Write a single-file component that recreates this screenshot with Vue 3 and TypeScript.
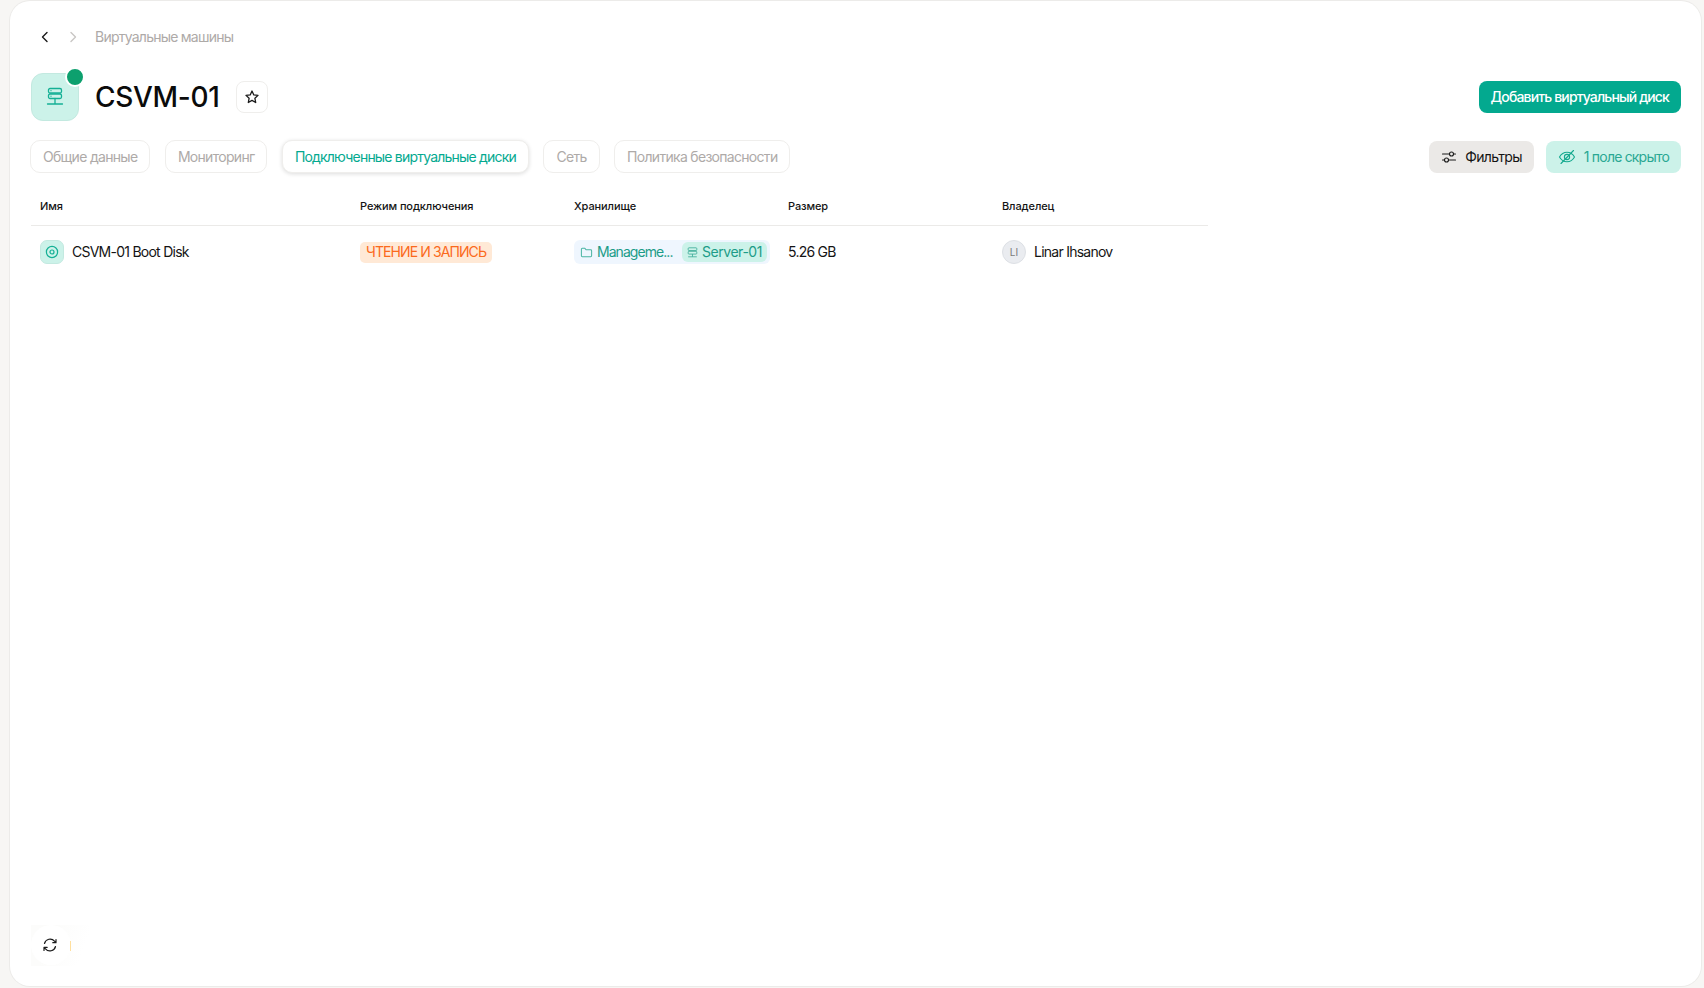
<script setup lang="ts">
const tabs = [
  { label: 'Общие данные', active: false },
  { label: 'Мониторинг', active: false },
  { label: 'Подключенные виртуальные диски', active: true },
  { label: 'Сеть', active: false },
  { label: 'Политика безопасности', active: false },
]
const columns = ['Имя', 'Режим подключения', 'Хранилище', 'Размер', 'Владелец']
</script>

<template>
  <div class="page">
    <main class="card">
      <nav class="crumbs">
        <svg class="nav-icon" viewBox="0 0 16 16"><path d="M10 3.500 5.500 8l4.500 4.500" fill="none" stroke="#1a1a1a" stroke-width="1.400" stroke-linecap="round" stroke-linejoin="round" /></svg>
        <svg class="nav-icon" viewBox="0 0 16 16"><path d="M6 3.500 10.500 8 6 12.500" fill="none" stroke="#c9c6c4" stroke-width="1.400" stroke-linecap="round" stroke-linejoin="round" /></svg>
        <span class="crumb-text">Виртуальные машины</span>
      </nav>

      <header class="head">
        <div class="vm-tile">
          <svg width="20" height="20" viewBox="0 0 20 20" fill="none" stroke="#14b095" stroke-width="1.300" stroke-linecap="round">
            <rect x="3.500" y="1.500" width="13" height="4.500" rx="1.500" />
            <rect x="3.500" y="7" width="13" height="4.500" rx="1.500" />
            <path d="M10 11.500V17M2.500 17h15M6 3.700h.01M6 9.200h.01" />
          </svg>
          <span class="status-dot"></span>
        </div>
        <h1 class="title">CSVM-01</h1>
        <button class="star">
          <svg width="16" height="16" viewBox="0 0 16 16"><path d="M8 2l1.800 3.900 4.200.5-3.100 2.900.8 4.200L8 11.400l-3.700 2.100.8-4.200L2 6.400l4.200-.5z" fill="none" stroke="#1a1a1a" stroke-width="1.300" stroke-linejoin="round" /></svg>
        </button>
        <button class="add">Добавить виртуальный диск</button>
      </header>

      <div class="toolbar">
        <div class="tabs">
          <button v-for="t in tabs" :key="t.label" class="tab" :class="{ active: t.active }">{{ t.label }}</button>
        </div>
        <div class="actions">
          <button class="act filters">
            <svg width="16" height="16" viewBox="0 0 16 16" fill="none" stroke="#1a1a1a" stroke-width="1.100" stroke-linecap="round"><path d="M1.500 5h7M12.500 5h2M1.500 11h2M7.500 11h7" /><circle cx="10.500" cy="5" r="2" /><circle cx="5.500" cy="11" r="2" /></svg>
            Фильтры
          </button>
          <button class="act hidden-f">
            <svg width="18" height="18" viewBox="0 0 18 18" fill="none" stroke="#14a98e" stroke-width="1.100" stroke-linecap="round"><path d="M1.500 9C3.300 5.800 6 4.200 9 4.200s5.700 1.600 7.500 4.800c-1.800 3.200-4.500 4.800-7.500 4.800S3.300 12.200 1.500 9z" /><circle cx="9" cy="9" r="2.600" /><path d="M3 15.500 15.500 2.500" /></svg>
            1 поле скрыто
          </button>
        </div>
      </div>

      <div class="table">
        <div class="row thead">
          <div v-for="c in columns" :key="c" class="cell">{{ c }}</div>
        </div>
        <div class="row tbody">
          <div class="cell name">
            <span class="disk-tile">
              <svg width="14" height="14" viewBox="0 0 14 14" fill="none" stroke="#14b095" stroke-width="1.200"><circle cx="7" cy="7" r="5.600" /><circle cx="7" cy="7" r="2" /></svg>
            </span>
            <span class="t">CSVM-01 Boot Disk</span>
          </div>
          <div class="cell"><span class="mode">ЧТЕНИЕ И ЗАПИСЬ</span></div>
          <div class="cell">
            <div class="storage">
              <span class="folder">
                <svg width="13" height="13" viewBox="0 0 14 14" fill="none" stroke="#4bb5a3" stroke-width="1.100" stroke-linejoin="round"><path d="M1.500 3.500a1 1 0 0 1 1-1h2.800l1.200 1.500h5a1 1 0 0 1 1 1v5.500a1 1 0 0 1-1 1h-9a1 1 0 0 1-1-1z" /></svg>
                <span class="t">Manageme...</span>
              </span>
              <span class="server">
                <svg width="13" height="13" viewBox="0 0 14 14" fill="none" stroke="#3fae9a" stroke-width="1.100"><rect x="1.500" y="1" width="11" height="3.500" rx="1" /><rect x="1.500" y="5.500" width="11" height="3.500" rx="1" /><path d="M7 9v3.500M1.500 12.500h11" /></svg>
                <span class="t">Server-01</span>
              </span>
            </div>
          </div>
          <div class="cell"><span class="t">5.26 GB</span></div>
          <div class="cell owner"><span class="avatar">LI</span><span class="t">Linar Ihsanov</span></div>
        </div>
      </div>

      <div class="refresh-wrap">
        <button class="refresh">
          <svg width="16" height="16" viewBox="0 0 16 16" fill="none" stroke="#1a1a1a" stroke-width="1.200" stroke-linecap="round" stroke-linejoin="round"><path d="M2.500 6.500A5.700 5.700 0 0 1 12.500 4.200L14 5.700M14 2.500v3.200h-3.200M13.500 9.500A5.700 5.700 0 0 1 3.500 11.800L2 10.300M2 13.500v-3.200h3.200" /></svg>
        </button>
      </div>
    </main>
  </div>
</template>

<style>
html, body { margin: 0; background: #f7f6f4; }
</style>

<style scoped>
* { box-sizing: border-box; }
.page {
  height: 988px;
  padding: 1px 3px 2px 10px;
  font-family: Inter, "Noto Sans", sans-serif;
  color: #141414;
}
.card {
  position: relative;
  height: 100%;
  padding: 0 20px 0 21px;
  background: #fff;
  border-radius: 20px;
  box-shadow: 0 0 0 1px #ecebe9;
}
button { font-family: inherit; cursor: pointer; }
.crumbs {
  display: flex;
  align-items: center;
  height: 72px;
  padding: 0 0 0 6px;
  gap: 12px;
}
.nav-icon { width: 16px; height: 16px; flex: none; }
.crumb-text { margin-left: 2px; padding-bottom: 2px; font-size: 14px; letter-spacing: -0.76px; color: #aeaaa8; }
.head { display: flex; align-items: center; height: 48px; }
.vm-tile {
  position: relative;
  display: flex;
  align-items: center;
  justify-content: center;
  width: 48px;
  height: 48px;
  background: #ccf2e9;
  border: 1px solid #c3e9e0;
  border-radius: 12px;
}
.status-dot {
  position: absolute;
  top: -7px;
  right: -7px;
  width: 20px;
  height: 20px;
  background: #0da06e;
  border: 2px solid #fff;
  border-radius: 50%;
}
.title { margin: 0 0 0 16px; font-size: 28px; line-height: 40px; font-weight: 500; letter-spacing: -0.3px; color: #0b0b0b; }
.star {
  display: flex;
  align-items: center;
  justify-content: center;
  width: 32px;
  height: 32px;
  margin-left: 16px;
  padding: 0;
  background: #fff;
  border: 1px solid #efeeec;
  border-radius: 8px;
}
.add {
  height: 32px;
  margin-left: auto;
  padding: 0 12px 2px;
  border: 0;
  border-radius: 8px;
  background: #03a98f;
  color: #fff;
  font-size: 14px;
  font-weight: 500;
  letter-spacing: -0.86px;
}
.toolbar { display: flex; justify-content: space-between; align-items: center; margin-top: 19px; height: 33px; }
.tabs { display: flex; gap: 14.5px; margin-left: -1px; }
.tab {
  height: 33px;
  padding: 0 12px;
  background: #fff;
  border: 1px solid #efeeec;
  border-radius: 10px;
  color: #aeaaa8;
  font-size: 14px;
  letter-spacing: -0.7px;
}
.tab.active { color: #03a98f; letter-spacing: -0.8px; box-shadow: 0 1px 4px rgba(0, 0, 0, 0.14); }
.actions { display: flex; gap: 12px; }
.act {
  display: flex;
  align-items: center;
  gap: 8px;
  height: 32px;
  padding: 0 12px;
  border: 0;
  border-radius: 8px;
  font-size: 14px;
  letter-spacing: -0.65px;
}
.filters { background: #ebe9e7; color: #141414; }
.hidden-f { background: #ccf2e9; color: #2aa893; letter-spacing: -0.8px; }
.table { width: 1177px; margin-top: 15px; }
.row { display: grid; grid-template-columns: 320px 214px 214px 214px 215px; }
.thead {
  height: 38px;
  align-items: center;
  border-bottom: 1px solid #ebeae8;
  font-size: 11px;
  font-weight: 500;
  color: #141414;
  padding-bottom: 1px;
  letter-spacing: -0.1px;
}
.cell { padding-left: 9px; display: flex; align-items: center; }
.tbody { height: 52px; font-size: 14px; letter-spacing: -0.75px; }
.t { padding-bottom: 2px; }
.disk-tile {
  display: flex;
  align-items: center;
  justify-content: center;
  width: 24px;
  height: 24px;
  margin-right: 8px;
  background: #ccf2e9;
  border: 1px solid #c3e9e0;
  border-radius: 7px;
}
.mode {
  display: flex;
  align-items: center;
  height: 21px;
  padding: 0 6px 2px;
  background: #ffe9d6;
  border-radius: 5px;
  color: #fb6a1c;
  font-size: 14px;
  letter-spacing: -0.9px;
}
.storage {
  display: flex;
  align-items: center;
  width: 196px;
  height: 24px;
  padding: 0 2px 0 6px;
  background: #eff6fe;
  border-radius: 6px;
  color: #1c9c88;
}
.folder { display: flex; align-items: center; gap: 4px; width: 102px; flex: none; letter-spacing: -0.95px; }
.server {
  display: flex;
  align-items: center;
  gap: 4px;
  width: 85px;
  height: 20px;
  padding: 0 5px;
  background: #ccf2e9;
  border-radius: 6px;
  white-space: nowrap;
  letter-spacing: -0.45px;
}
.avatar {
  display: flex;
  align-items: center;
  justify-content: center;
  width: 24px;
  height: 24px;
  margin-right: 8px;
  background: #eaecf0;
  border: 1px solid #dde0e5;
  border-radius: 50%;
  color: #7b7b7b;
  font-size: 10px;
  letter-spacing: 0;
}
.refresh-wrap {
  position: absolute;
  left: 21px;
  top: 924px;
  width: 62px;
  height: 41px;
  background: linear-gradient(110deg, #fcfcfb 30%, rgba(255, 255, 255, 0) 80%);
}
.refresh-wrap::after {
  content: "";
  position: absolute;
  z-index: 2;
  left: 39px;
  top: 16px;
  width: 1px;
  height: 10px;
  background: #ffdf9e;
}
.refresh {
  position: relative;
  z-index: 1;
  display: flex;
  align-items: center;
  justify-content: center;
  width: 40px;
  height: 40px;
  padding: 0 2px 0 0;
  background: #fff;
  border: 0;
  border-radius: 50%;
}
</style>
